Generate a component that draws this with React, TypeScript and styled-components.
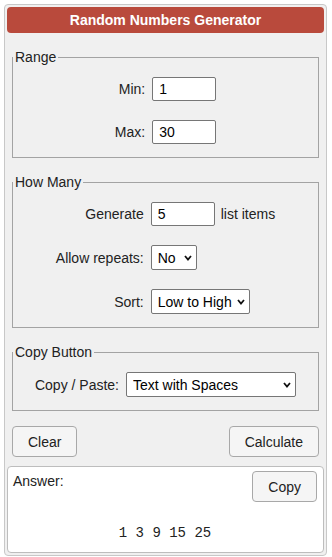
import React from "react";
import styled, { createGlobalStyle } from "styled-components";

const GlobalStyle = createGlobalStyle`
  body {
    margin: 0;
    background: #ffffff;
    font-family: "Liberation Sans", Arial, sans-serif;
    font-size: 14px;
    color: #222;
  }
`;

const Panel = styled.div`
  width: 323px;
  box-sizing: border-box;
  margin: 4px 0 0 4px;
  padding: 2px;
  background: #f0f0f0;
  border: 1px solid #c8c8c8;
  border-radius: 4px;
`;

const Title = styled.div`
  height: 26px;
  line-height: 26px;
  background: #b94a3c;
  border-radius: 4px;
  color: #fff;
  font-weight: bold;
  font-size: 14px;
  text-align: center;
`;

const Group = styled.fieldset`
  margin: 16px 5px 0;
  padding: 12px 0 13px;
  border: 1px solid #a3a3a3;
  min-width: 0;
`;

const Legend = styled.legend`
  padding: 0 2px;
  font-size: 14px;
  line-height: 16px;
  color: #222;
`;

const FormGrid = styled.div`
  display: grid;
  grid-template-columns: auto auto;
  justify-content: center;
  align-items: center;
  column-gap: 7px;
  row-gap: 19px;
`;

const Label = styled.label`
  text-align: right;
  white-space: nowrap;
`;

const Field = styled.div`
  display: flex;
  align-items: center;
  gap: 6px;
  white-space: nowrap;
`;

const NumInput = styled.input`
  width: 64px;
  height: 24px;
  box-sizing: border-box;
  padding: 0 6px;
  border: 1px solid #767676;
  border-radius: 2px;
  background: #fff;
  font-family: "Liberation Sans", Arial, sans-serif;
  font-size: 14px;
  color: #000;
  outline: none;
`;

const SelectWrap = styled.span<{ $w: number }>`
  position: relative;
  display: inline-block;
  width: ${(p) => p.$w}px;
  height: 25px;
`;

const Select = styled.select`
  appearance: none;
  -webkit-appearance: none;
  width: 100%;
  height: 100%;
  box-sizing: border-box;
  padding: 0 16px 0 6px;
  border: 1px solid #767676;
  border-radius: 2px;
  background: #fff;
  font-family: "Liberation Sans", Arial, sans-serif;
  font-size: 14px;
  color: #000;
  outline: none;
`;

const Chevron = styled.svg`
  position: absolute;
  right: 5px;
  top: 10px;
  width: 8px;
  height: 6px;
  pointer-events: none;
`;

const ButtonRow = styled.div`
  display: flex;
  justify-content: space-between;
  margin: 15px 5px 0;
`;

const Button = styled.button`
  height: 31px;
  padding: 0 15px;
  border: 1px solid #a8a8a8;
  border-radius: 4px;
  background: #f5f5f5;
  font-family: "Liberation Sans", Arial, sans-serif;
  font-size: 14px;
  color: #222;
`;

const AnswerBox = styled.div`
  margin-top: 9px;
  height: 87px;
  box-sizing: border-box;
  padding: 4px 6px 0 5px;
  background: #fff;
  border: 1px solid #bdbdbd;
  border-radius: 4px;
  display: flex;
  flex-direction: column;
`;

const AnswerHead = styled.div`
  display: flex;
  justify-content: space-between;
  align-items: flex-start;
`;

const AnswerLabel = styled.span`
  margin-top: 2px;
  font-size: 14px;
`;

const Result = styled.div`
  margin-top: 23px;
  text-align: center;
  font-family: "Liberation Mono", "Courier New", monospace;
  font-size: 14px;
  color: #222;
  white-space: pre;
`;

function Dropdown({ width, value, options }: { width: number; value: string; options: string[] }) {
  return (
    <SelectWrap $w={width}>
      <Select defaultValue={value}>
        {options.map((o) => (
          <option key={o}>{o}</option>
        ))}
      </Select>
      <Chevron viewBox="0 0 8 6">
        <polyline points="1,1 4,4.5 7,1" fill="none" stroke="#111" strokeWidth="1.8" />
      </Chevron>
    </SelectWrap>
  );
}

export default function App() {
  return (
    <>
      <GlobalStyle />
      <Panel>
        <Title>Random Numbers Generator</Title>

        <Group>
          <Legend>Range</Legend>
          <FormGrid>
            <Label>Min:</Label>
            <Field>
              <NumInput defaultValue="1" />
            </Field>
            <Label>Max:</Label>
            <Field>
              <NumInput defaultValue="30" />
            </Field>
          </FormGrid>
        </Group>

        <Group>
          <Legend>How Many</Legend>
          <FormGrid>
            <Label>Generate</Label>
            <Field>
              <NumInput defaultValue="5" />
              list items
            </Field>
            <Label>Allow repeats:</Label>
            <Field>
              <Dropdown width={46} value="No" options={["No", "Yes"]} />
            </Field>
            <Label>Sort:</Label>
            <Field>
              <Dropdown width={99} value="Low to High" options={["Low to High", "High to Low", "None"]} />
            </Field>
          </FormGrid>
        </Group>

        <Group>
          <Legend>Copy Button</Legend>
          <FormGrid>
            <Label>Copy / Paste:</Label>
            <Field>
              <Dropdown
                width={170}
                value="Text with Spaces"
                options={["Text with Spaces", "Text with Commas", "Text with New Lines"]}
              />
            </Field>
          </FormGrid>
        </Group>

        <ButtonRow>
          <Button>Clear</Button>
          <Button>Calculate</Button>
        </ButtonRow>

        <AnswerBox>
          <AnswerHead>
            <AnswerLabel>Answer:</AnswerLabel>
            <Button>Copy</Button>
          </AnswerHead>
          <Result>1 3 9 15 25</Result>
        </AnswerBox>
      </Panel>
    </>
  );
}
